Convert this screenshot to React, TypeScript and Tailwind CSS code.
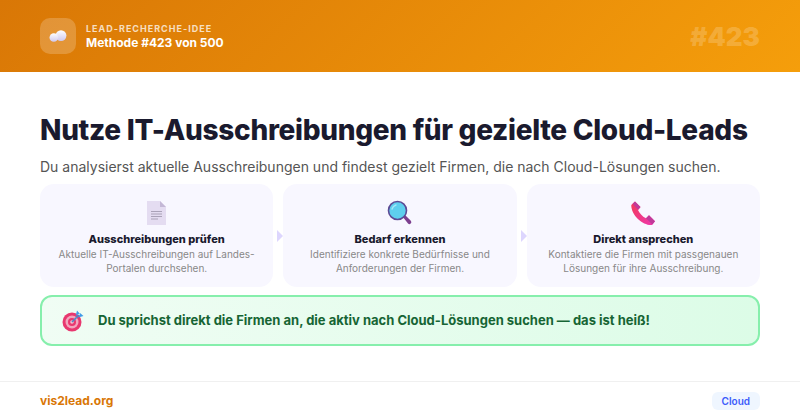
import * as React from 'react';

// Cloud emoji
function CloudIcon() {
  return (
    <svg width="18" height="12" viewBox="0 0 18 12">
      <defs>
        <linearGradient id="cloudFill" x1="0" y1="0" x2="0" y2="1">
          <stop offset="0" stopColor="#ffffff" />
          <stop offset="1" stopColor="#cfc8ee" />
        </linearGradient>
      </defs>
      <circle cx="12" cy="5.600" r="5.400" fill="url(#cloudFill)" />
      <circle cx="4.800" cy="7.500" r="4.300" fill="url(#cloudFill)" />
    </svg>
  );
}

function DocumentIcon() {
  return (
    <svg width="19" height="24" viewBox="0 0 19 24">
      <path d="M0 0h13l6 6v18H0z" fill="#e4dcf1" />
      <path d="M13 0l6 6h-6z" fill="#c4b8d6" />
      <path d="M4 10h11v1H4zM4 12.500h11v1H4zM4 15h11v1H4zM4 17.500h7v1H4z" fill="#aaa2b8" />
    </svg>
  );
}

function SearchIcon() {
  return (
    <svg width="26" height="26" viewBox="0 0 26 26">
      <path d="M15.500 16.500l2-2 6.300 6.300a1.900 1.900 0 0 1-.1 2.700 1.900 1.900 0 0 1-2.700 0z" fill="#7d3f8f" />
      <circle cx="10.500" cy="10.500" r="9" fill="#5ecfee" stroke="#5c4a95" strokeWidth="1.600" />
      <path d="M5 9a6 6 0 0 1 4-4" fill="none" stroke="#a5e8f8" strokeWidth="1.400" strokeLinecap="round" />
    </svg>
  );
}

function PhoneIcon() {
  return (
    <svg width="25" height="25" viewBox="0 0 25 25">
      <defs>
        <linearGradient id="phoneFill" x1="0" y1="0" x2="1" y2="1">
          <stop offset="0" stopColor="#f23a58" />
          <stop offset="1" stopColor="#ee38b0" />
        </linearGradient>
      </defs>
      <path d="M4 .500l5.500 5.500-2.500 3c1.300 3 4.200 6.500 8 8.300l3-3 6 6-3 3.700C13 25 0 15 .300 4z" fill="url(#phoneFill)" />
      <path d="M4 .500l5.500 5.500-2.300 2.800L1.600 2.800zM18 14.300l6 6-2.600 3.200-6.400-6.200z" fill="#c03a9a" />
    </svg>
  );
}

function TargetIcon() {
  return (
    <svg width="22" height="22" viewBox="0 0 22 22">
      <circle cx="10" cy="12" r="9.500" fill="#e8386f" />
      <circle cx="10" cy="12" r="6.500" fill="#f3a6bd" />
      <circle cx="10" cy="12" r="4" fill="#e8386f" />
      <circle cx="10" cy="12" r="1.800" fill="#f3c1d0" />
      <path d="M10 12l7-7" stroke="#4f86c6" strokeWidth="1.600" />
      <path d="M13.500 6.500l1.500-6 3 3.500-2 4zM14.500 8l7-2-3.500-3-4.500 3z" fill="#3f9be8" />
    </svg>
  );
}

const steps = [
  { icon: <DocumentIcon />, title: 'Ausschreibungen prüfen', text: ['Aktuelle IT-Ausschreibungen auf Landes-', 'Portalen durchsehen.'] },
  { icon: <SearchIcon />, title: 'Bedarf erkennen', text: ['Identifiziere konkrete Bedürfnisse und', 'Anforderungen der Firmen.'] },
  { icon: <PhoneIcon />, title: 'Direkt ansprechen', text: ['Kontaktiere die Firmen mit passgenauen', 'Lösungen für ihre Ausschreibung.'] },
];

export default function App() {
  return (
    <div className="flex h-[420px] w-[800px] flex-col overflow-hidden bg-white font-['Inter',sans-serif]">
      <header className="flex h-[72px] items-center justify-between bg-[linear-gradient(135deg,#d97706,#f59e0b)] px-10">
        <div className="flex items-center gap-[10px]">
          <div className="flex h-9 w-9 items-center justify-center rounded-[10px] bg-white/20">
            <CloudIcon />
          </div>
          <div>
            <p className="text-[9px] leading-[13px] font-bold tracking-[1px] text-white/75">LEAD-RECHERCHE-IDEE</p>
            <p className="text-[12px] leading-[16px] font-bold text-white">Methode #423 von 500</p>
          </div>
        </div>
        <span className="text-[26px] font-black text-white/20">#423</span>
      </header>

      <main className="flex flex-1 flex-col px-10 pt-[40px]">
        <h1 className="text-[28px] leading-[36px] font-extrabold tracking-[-0.3px] whitespace-nowrap text-[#1a1a2e]">
          Nutze IT-Ausschreibungen für gezielte Cloud-Leads
        </h1>
        <p className="mt-2 text-[14px] leading-[22px] whitespace-nowrap text-[#555555]">
          Du analysierst aktuelle Ausschreibungen und findest gezielt Firmen, die nach Cloud-Lösungen suchen.
        </p>

        <div className="mt-[6px] flex">
          {steps.map((step, i) => (
            <React.Fragment key={step.title}>
              {i > 0 && (
                <div className="flex w-[10px] shrink-0 items-center justify-end">
                  <div className="h-0 w-0 border-y-[6px] border-l-[6px] border-y-transparent border-l-[#ddd6fe]" />
                </div>
              )}
              <div className="flex h-[103px] flex-1 flex-col items-center rounded-[14px] bg-[#f8f7ff] pt-[15px] text-center">
                <div className="flex h-[28px] items-center justify-center">{step.icon}</div>
                <p className="mt-1 text-[11px] leading-[16px] font-extrabold text-[#1a1a2e]">{step.title}</p>
                <p className="text-[10px] leading-[14px] text-[#888888]">
                  {step.text[0]}
                  <br />
                  {step.text[1]}
                </p>
              </div>
            </React.Fragment>
          ))}
        </div>

        <div className="mt-2 flex h-[51px] items-center gap-[14px] rounded-[12px] border-2 border-[#86efac] bg-gradient-to-r from-[#f0fdf4] to-[#dcfce7] px-5">
          <TargetIcon />
          <p className="pt-px text-[13px] font-bold whitespace-nowrap text-[#166534]">
            Du sprichst direkt die Firmen an, die aktiv nach Cloud-Lösungen suchen — das ist heiß!
          </p>
        </div>
      </main>

      <footer className="flex h-[39px] items-center justify-between border-t border-[#f0f0f0] px-10">
        <span className="text-[12px] font-bold text-[#d97706]">vis2lead.org</span>
        <span className="rounded-md bg-[#eff6ff] px-[10px] py-[2px] text-[10px] leading-[14px] font-semibold text-[#3b5bfb]">Cloud</span>
      </footer>
    </div>
  );
}
